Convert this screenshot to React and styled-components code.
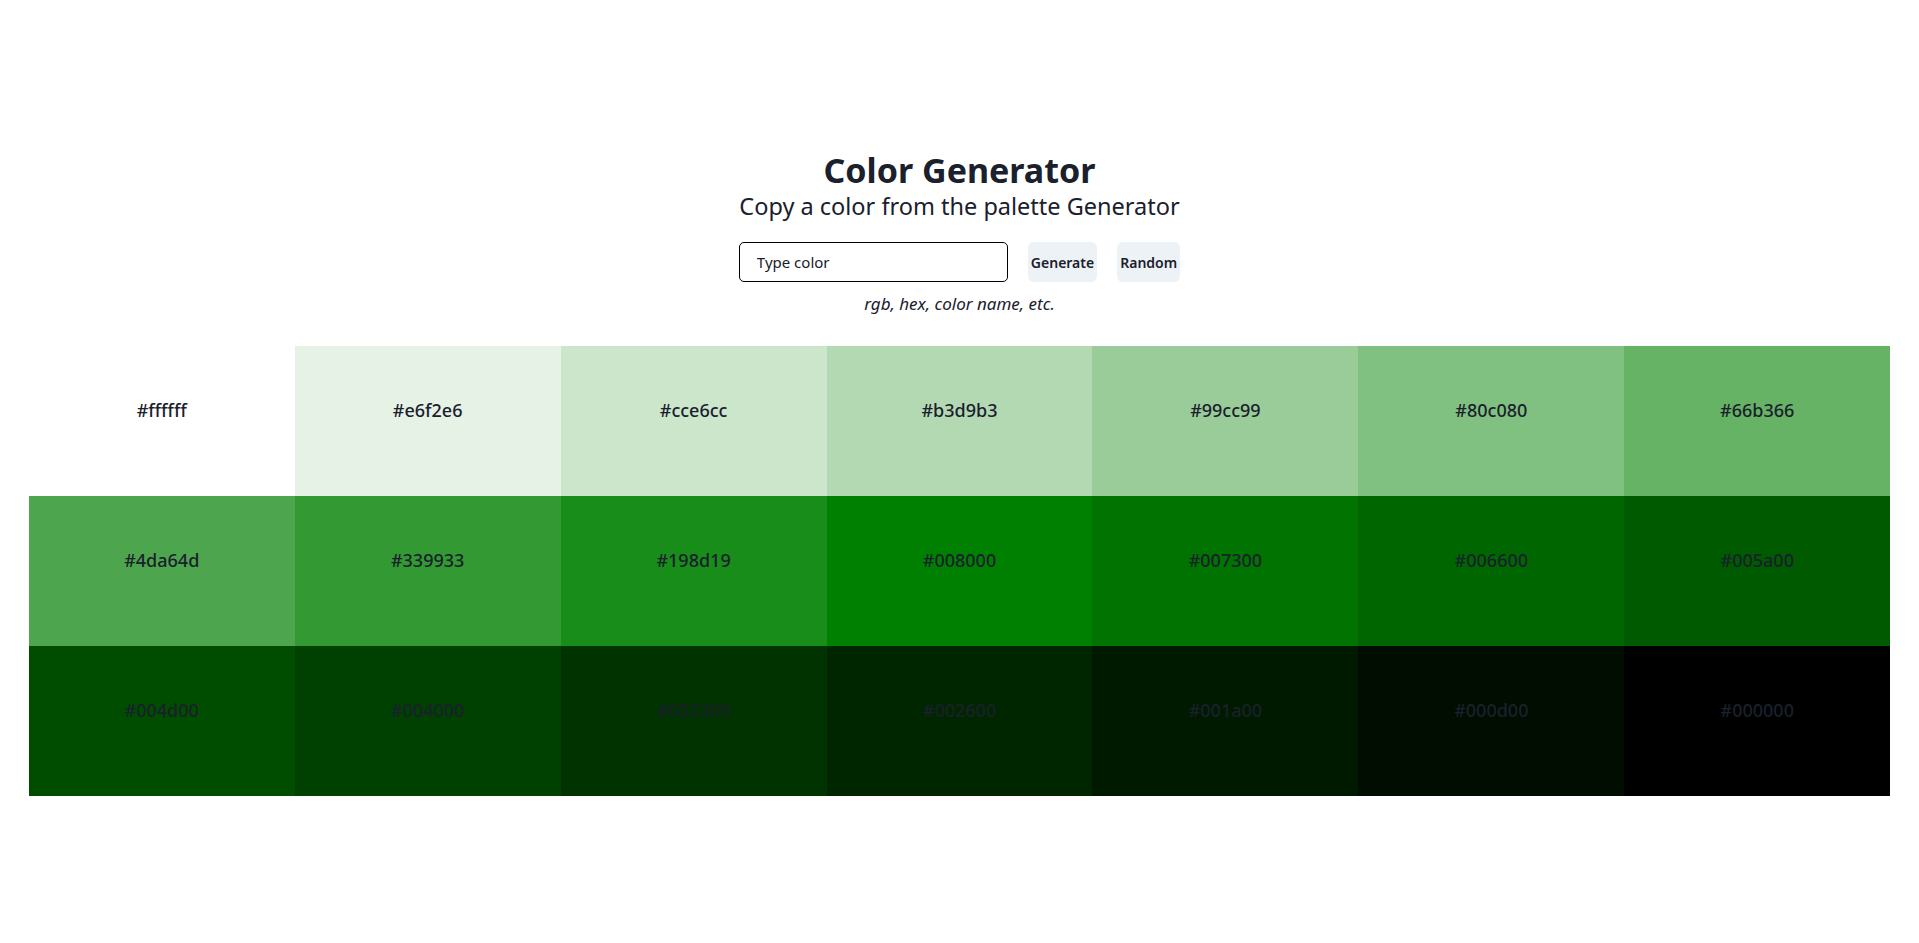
import React, { useState } from "react";
import styled, { createGlobalStyle } from "styled-components";

const GlobalStyle = createGlobalStyle`
    body {
        margin: 0;
        background: #ffffff;
        color: #1a202c;
        font-family: "Noto Sans", "Open Sans", "Liberation Sans", sans-serif;
    }
`;

const palette = [
    "#ffffff", "#e6f2e6", "#cce6cc", "#b3d9b3", "#99cc99", "#80c080", "#66b366",
    "#4da64d", "#339933", "#198d19", "#008000", "#007300", "#006600", "#005a00",
    "#004d00", "#004000", "#003300", "#002600", "#001a00", "#000d00", "#000000",
];

const App = () => {
    const [color, setColor] = useState("");

    return (
        <React.Fragment>
            <GlobalStyle />
            <Page>
                <Header>
                    <Title>Color Generator</Title>
                    <Subtitle>Copy a color from the palette Generator</Subtitle>
                    <Form onSubmit={(e) => e.preventDefault()}>
                        <Input
                            placeholder="Type color"
                            value={color}
                            onChange={(e) => setColor(e.target.value)}
                        />
                        <Button type="submit">Generate</Button>
                        <Button type="button">Random</Button>
                    </Form>
                    <Hint>rgb, hex, color name, etc.</Hint>
                </Header>
                <Grid>
                    {palette.map((hex) =>
                        <Swatch key={hex} $bg={hex}>
                            <Label>{hex}</Label>
                        </Swatch>
                    )}
                </Grid>
            </Page>
        </React.Fragment>
    );
}

const Page = styled.main`
    padding-top: 149px;
    padding-bottom: 148px;
`;

const Header = styled.header`
    display: flex;
    flex-direction: column;
    align-items: center;
`;

const Title = styled.h1`
    margin: 0;
    font-size: 34px;
    line-height: 43px;
    font-weight: 700;
`;

const Subtitle = styled.h2`
    margin: 0;
    font-size: 23.5px;
    line-height: 29px;
    font-weight: 400;
`;

const Form = styled.form`
    display: flex;
    gap: 20px;
    margin-top: 21px;
`;

const Input = styled.input`
    box-sizing: border-box;
    width: 269px;
    height: 40px;
    padding: 0 17px;
    border: 1px solid #000000;
    border-radius: 5px;
    font-family: inherit;
    font-size: 15px;
    color: #1a202c;
    outline: none;

    &::placeholder {
        color: #1a202c;
        opacity: 1;
    }
`;

const Button = styled.button`
    height: 40px;
    padding: 0 3px;
    border: none;
    border-radius: 6px;
    background: #edf2f7;
    color: #1a202c;
    font-family: inherit;
    font-size: 14px;
    font-weight: 600;
    cursor: pointer;
`;

const Hint = styled.p`
    margin: 10px 0 0;
    font-size: 17px;
    line-height: 24px;
    font-style: italic;
`;

const Grid = styled.section`
    display: grid;
    grid-template-columns: repeat(7, 1fr);
    grid-auto-rows: 150px;
    width: 97%;
    margin: 30px auto 0;
`;

const Swatch = styled.div`
    display: flex;
    align-items: center;
    justify-content: center;
    padding-bottom: 22px;
    background: ${(props) => props.$bg};
    cursor: pointer;
`;

const Label = styled.span`
    font-size: 18px;
    font-weight: 500;
    color: #1a202c;
`;

export default App;
